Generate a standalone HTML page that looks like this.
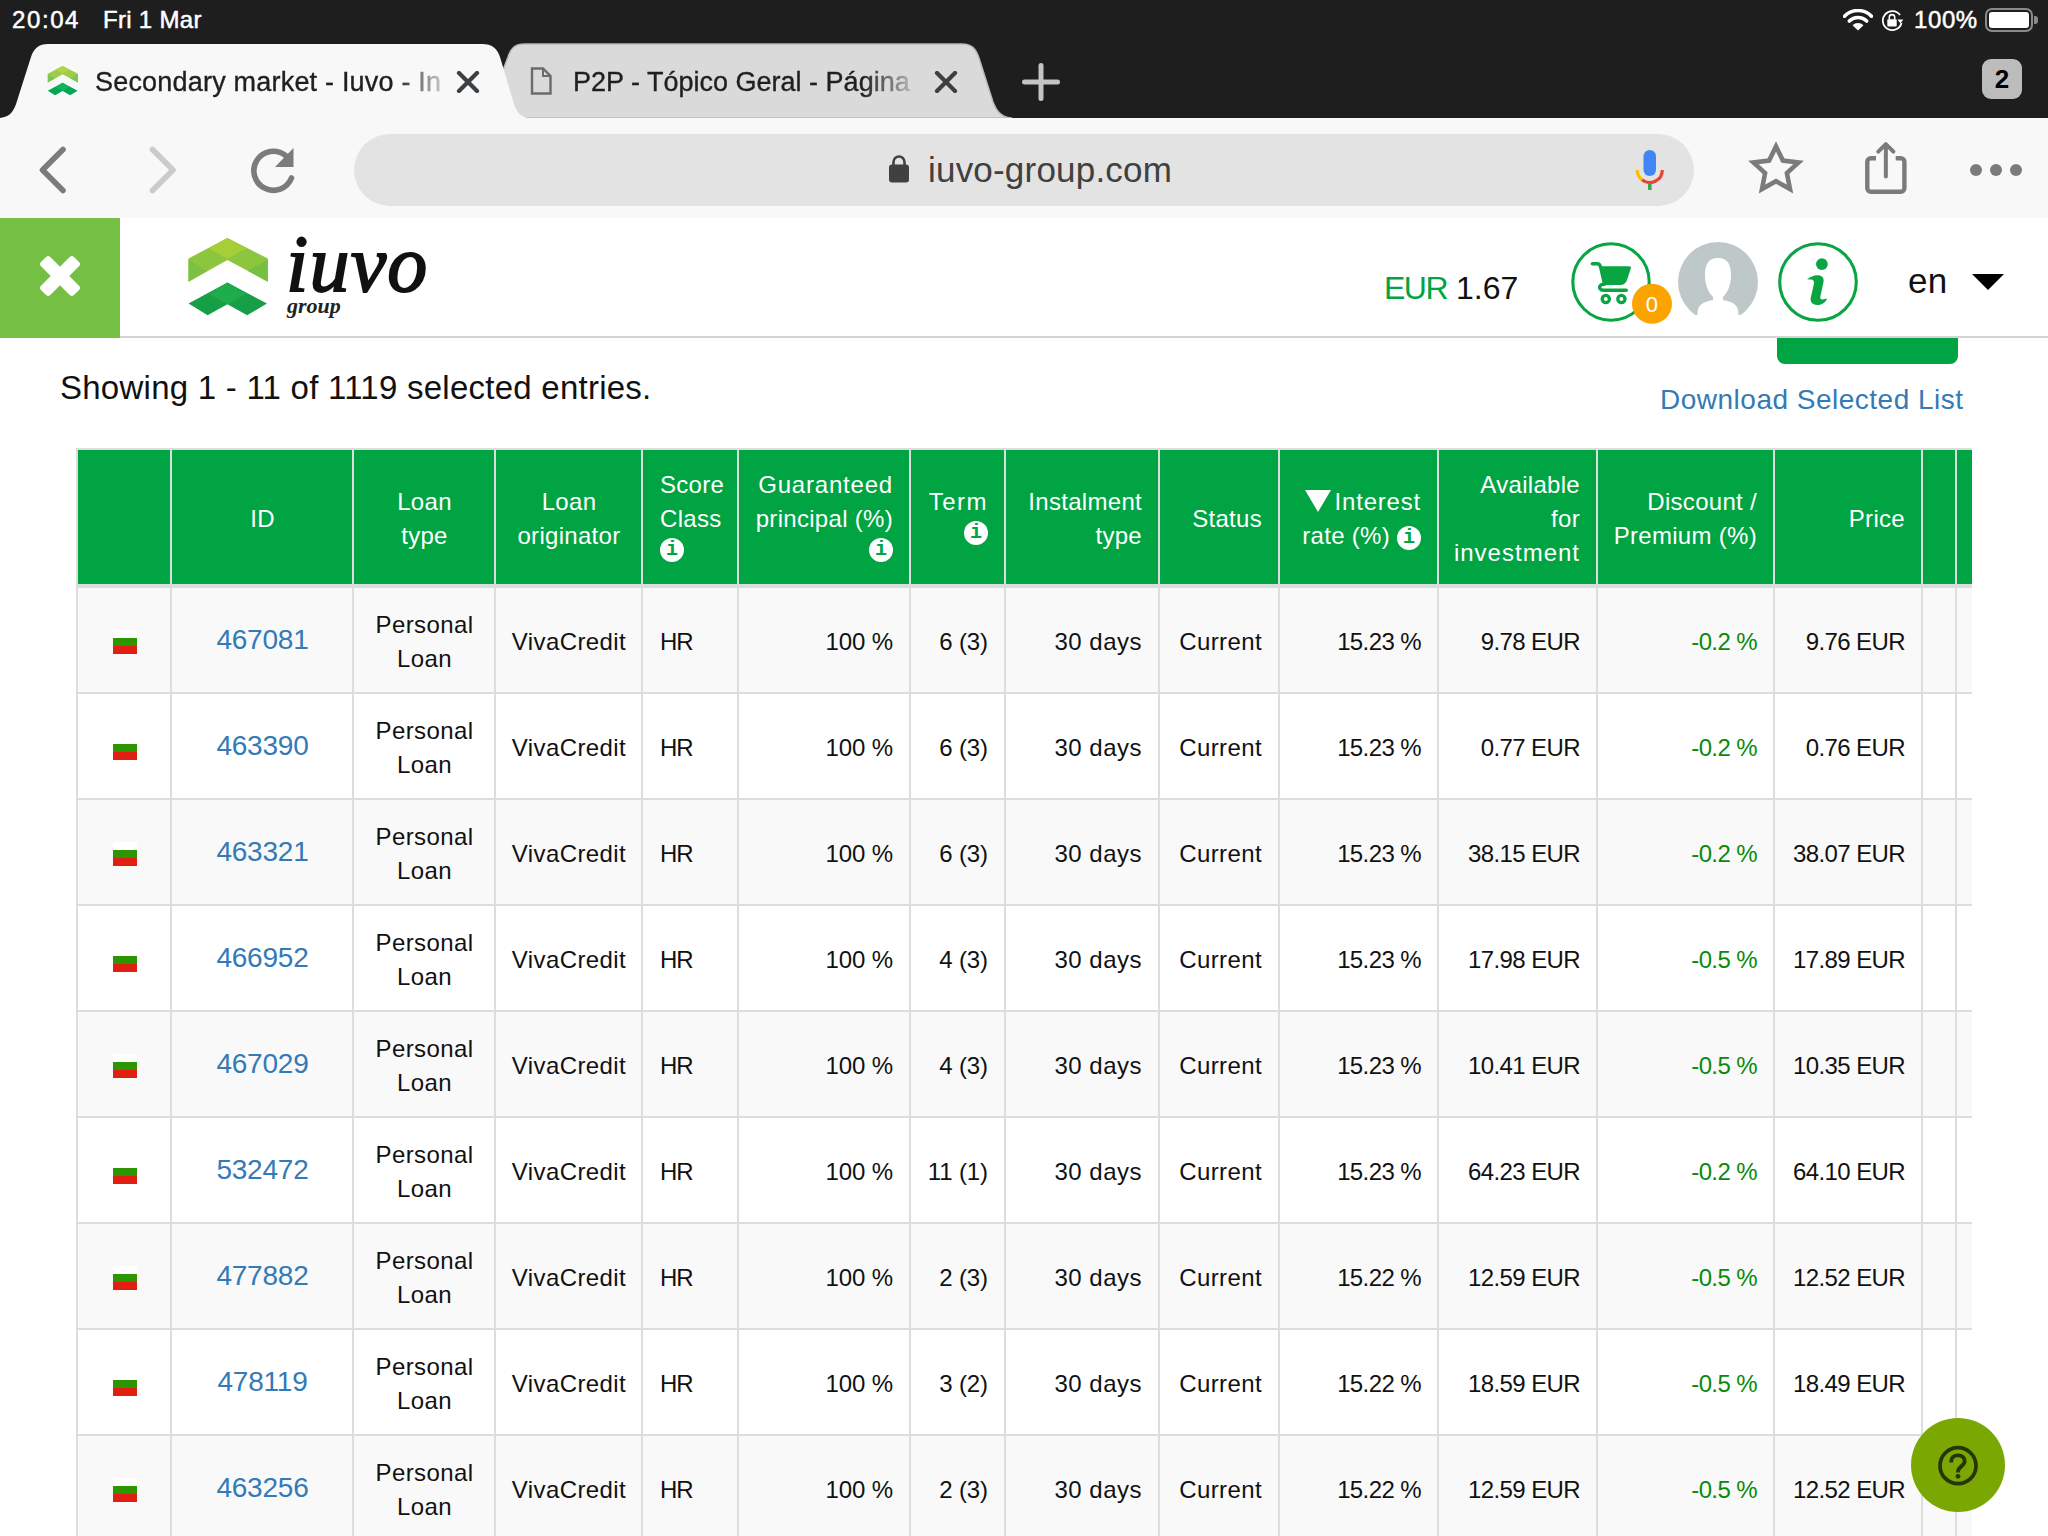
<!DOCTYPE html><html><head><meta charset="utf-8"><style>
*{margin:0;padding:0;box-sizing:border-box}
html,body{width:2048px;height:1536px;overflow:hidden;background:#fff;font-family:"Liberation Sans",sans-serif;position:relative}
.a{position:absolute}
.sb{color:#fff;font-size:24px;-webkit-text-stroke:0.5px #fff}
.hc{position:absolute;display:flex;flex-direction:column;justify-content:center;color:#fff;font-size:24px;line-height:34px;padding:3px 16px 0 17px;letter-spacing:0.3px;white-space:nowrap}
.bc{position:absolute;display:flex;flex-direction:column;justify-content:center;color:#111;font-size:24px;line-height:34px;padding:4px 16px 0 17px;letter-spacing:-0.6px;white-space:nowrap}.w{letter-spacing:0.4px}
.L{align-items:flex-start;text-align:left}
.C{align-items:center;text-align:center}
.R{align-items:flex-end;text-align:right}
.ii{display:inline-block;width:24px;height:24px;border-radius:50%;background:#fff;color:#00a443;font-family:"Liberation Mono",monospace;font-weight:bold;font-size:20px;line-height:24px;text-align:center;letter-spacing:0;vertical-align:middle;position:relative;top:-4px}
.tri{display:inline-block;width:0;height:0;border-left:13px solid transparent;border-right:13px solid transparent;border-top:22px solid #fff;margin-right:4px;vertical-align:-2px}.hc .ln{display:block}</style></head><body><div class="a" style="left:0;top:0;width:2048px;height:118px;background:#1e1e1e"></div><div class="a sb" style="left:12px;top:3px;line-height:34px;letter-spacing:1.6px">20:04</div><div class="a sb" style="left:103px;top:3px;line-height:34px;letter-spacing:0.3px">Fri 1 Mar</div><div class="a sb" style="left:1914px;top:3px;line-height:34px;letter-spacing:0.6px">100%</div><svg class="a" style="left:1843px;top:9px" width="30" height="22" viewBox="0 0 30 22">
<path d="M1.5 7.2 A19 19 0 0 1 28.5 7.2" fill="none" stroke="#fff" stroke-width="3.6" stroke-linecap="round"/>
<path d="M6.3 12 A12.5 12.5 0 0 1 23.7 12" fill="none" stroke="#fff" stroke-width="3.6" stroke-linecap="round"/>
<path d="M9.5 16.2 L15 21.5 L20.5 16.2 A8 8 0 0 0 9.5 16.2Z" fill="#fff"/>
</svg><svg class="a" style="left:1881px;top:9px" width="25" height="23" viewBox="0 0 25 23">
<path d="M20.5 14 A9.5 9.5 0 1 1 19 6" fill="none" stroke="#fff" stroke-width="1.8"/>
<path d="M17 10.5 L22.8 10.5 L20 14.5Z" fill="#fff" transform="translate(-0.5,0)"/>
<rect x="6.3" y="10.3" width="9.4" height="7.2" rx="1" fill="#fff"/>
<path d="M8.3 10.5 V8.3 A2.7 2.7 0 0 1 13.7 8.3 V10.5" fill="none" stroke="#fff" stroke-width="1.6"/>
</svg><div class="a" style="left:1985px;top:8px;width:48px;height:24px;border:2.5px solid #8a8a8a;border-radius:7px"></div><div class="a" style="left:1989px;top:12px;width:40px;height:16px;background:#fff;border-radius:3px"></div><div class="a" style="left:2034px;top:16px;width:4px;height:8px;background:#8a8a8a;border-radius:0 3px 3px 0"></div><svg class="a" style="left:0;top:40px" width="1100" height="80" viewBox="0 40 1100 80">
<path d="M470 118 L485 118 L508 57 C511 48 515 44 525 44 L962 44 C972 44 976 49 979 58 L993 102 C997 113 1003 118 1012 118 Z" fill="#dadada" stroke="#b9b9b9" stroke-width="1.5"/>
<path d="M-2 118 C10 118 14 111 17 101 L31 57 C34 48 39 44 48 44 L482 44 C492 44 497 48 500 57 L513 101 C516 111 520 118 530 118 Z" fill="#f8f8f8"/>
</svg><svg class="a" style="left:46px;top:64px" width="34" height="34" viewBox="0 0 34 34"><g transform="translate(1.8,1.9) scale(0.38) translate(-188.5,-238)">
<path d="M188.5 258.5 L227.4 238 L267.8 258.5 L267.8 281.7 L227.4 259.9 L188.5 281.7Z" fill="#9ccc4a"/>
<path d="M208.5 248.2 L227.4 238 L246.8 248.2 L227.4 258.7Z" fill="#b0d444"/>
<path d="M188.5 259.2 L207 271.3 L188.5 281.7Z" fill="#7dc455"/>
<path d="M267.8 259.2 L248 271 L267.8 281.7Z" fill="#7dc455"/>
<path d="M188.5 303.6 L227.4 282.4 L267 303.6 L247.2 315.2 L227.4 304.3 L207.6 315.2Z" fill="#03a654"/>
<path d="M209 294 L227.4 282.4 L245.9 294 L227.4 304.3Z" fill="#0db55b"/>
</g></svg><div class="a" style="left:95px;top:64px;width:345px;height:36px;overflow:hidden;white-space:nowrap;font-size:27px;line-height:36px;color:#1f1f1f;letter-spacing:0.2px;-webkit-text-stroke:0.35px #1f1f1f;-webkit-mask-image:linear-gradient(90deg,#000 300px,rgba(0,0,0,0.25) 345px)">Secondary market - Iuvo - Investing</div><svg class="a" style="left:456px;top:71px" width="24" height="22" viewBox="0 0 24 22"><path d="M3 2 L21 20 M21 2 L3 20" stroke="#3c4043" stroke-width="4.2" stroke-linecap="round"/></svg><svg class="a" style="left:530px;top:67px" width="22" height="28" viewBox="0 0 22 28"><path d="M2 1.5 H13 L20.5 9 V26.5 H2Z" fill="none" stroke="#6b6b6b" stroke-width="2.4"/><path d="M13 1.5 V9 H20.5" fill="none" stroke="#6b6b6b" stroke-width="2"/></svg><div class="a" style="left:573px;top:64px;width:338px;height:36px;overflow:hidden;white-space:nowrap;font-size:27px;line-height:36px;color:#1f1f1f;-webkit-text-stroke:0.35px #1f1f1f;-webkit-mask-image:linear-gradient(90deg,#000 290px,rgba(0,0,0,0.2) 338px)">P2P - Tópico Geral - Página 145</div><svg class="a" style="left:934px;top:71px" width="24" height="22" viewBox="0 0 24 22"><path d="M3 2 L21 20 M21 2 L3 20" stroke="#3c4043" stroke-width="4.2" stroke-linecap="round"/></svg><svg class="a" style="left:1022px;top:63px" width="38" height="38" viewBox="0 0 38 38"><path d="M19 2.5 V35.5 M2.5 19 H35.5" stroke="#c4c4c4" stroke-width="5" stroke-linecap="round"/></svg><div class="a" style="left:1982px;top:59px;width:40px;height:40px;background:#bcbcbc;border-radius:9px;color:#000;font-weight:bold;font-size:26px;line-height:40px;text-align:center">2</div><div class="a" style="left:0;top:118px;width:2048px;height:100px;background:#f8f8f8"></div><svg class="a" style="left:30px;top:140px" width="50" height="60" viewBox="0 0 50 60"><path d="M33 9.5 L12.5 30 L33 50.5" fill="none" stroke="#7b7b7b" stroke-width="5.6" stroke-linecap="round" stroke-linejoin="round"/></svg><svg class="a" style="left:140px;top:140px" width="50" height="60" viewBox="0 0 50 60"><path d="M12.5 9.5 L33 30 L12.5 50.5" fill="none" stroke="#cbcbcb" stroke-width="5.6" stroke-linecap="round" stroke-linejoin="round"/></svg><svg class="a" style="left:244px;top:142px" width="56" height="56" viewBox="0 0 56 56">
<path d="M47.5 36 A19.5 19.5 0 1 1 41.5 13.5" fill="none" stroke="#7b7b7b" stroke-width="5.6" stroke-linecap="round"/>
<path d="M49.5 6 L49.5 25 L31 25Z" fill="#7b7b7b"/></svg><div class="a" style="left:354px;top:134px;width:1340px;height:72px;background:#e3e3e3;border-radius:36px"></div><svg class="a" style="left:887px;top:155px" width="24" height="30" viewBox="0 0 24 30"><rect x="2" y="9.5" width="20" height="18" rx="3" fill="#404040"/><path d="M6.5 10 V7 A5.5 5.5 0 0 1 17.5 7 V10" fill="none" stroke="#404040" stroke-width="2.6"/></svg><div class="a" style="left:928px;top:148px;font-size:35px;line-height:44px;color:#404040;letter-spacing:0.2px">iuvo-group.com</div><svg class="a" style="left:1630px;top:146px" width="40" height="48" viewBox="0 0 40 48">
<rect x="13.5" y="4" width="12.5" height="26" rx="6.25" fill="#4285f4"/>
<path d="M7.3 24 A12.5 12.5 0 0 0 12 33.8" fill="none" stroke="#fbbc05" stroke-width="3.2"/>
<path d="M12 33.8 A12.5 12.5 0 0 0 32.3 24" fill="none" stroke="#ea4335" stroke-width="3.2"/>
<rect x="18" y="37" width="3.6" height="7" fill="#34a853"/>
</svg><svg class="a" style="left:1745px;top:138px" width="62" height="60" viewBox="0 0 62 60">
<path d="M31 8.5 L37.9 22.5 L53.6 24.4 L41.9 35.1 L45 51 L31 43.2 L17 51 L20.1 35.1 L8.4 24.4 L24.1 22.5Z" fill="none" stroke="#7b7b7b" stroke-width="4.6" stroke-linejoin="miter"/>
</svg><svg class="a" style="left:1858px;top:136px" width="56" height="64" viewBox="0 0 56 64">
<path d="M18 22.3 H12.8 A3.5 3.5 0 0 0 9.3 25.8 V52.2 A3.5 3.5 0 0 0 12.8 55.7 H42.9 A3.5 3.5 0 0 0 46.4 52.2 V25.8 A3.5 3.5 0 0 0 42.9 22.3 H37.7" fill="none" stroke="#7b7b7b" stroke-width="4.4" stroke-linecap="butt"/>
<path d="M27.85 40.5 V8.5 M20.3 15.7 L27.85 8.2 L35.4 15.7" fill="none" stroke="#7b7b7b" stroke-width="4" stroke-linecap="round" stroke-linejoin="round"/>
</svg><div class="a" style="left:1970px;top:164px;width:12px;height:12px;border-radius:50%;background:#7b7b7b"></div><div class="a" style="left:1990px;top:164px;width:12px;height:12px;border-radius:50%;background:#7b7b7b"></div><div class="a" style="left:2010px;top:164px;width:12px;height:12px;border-radius:50%;background:#7b7b7b"></div><div class="a" style="left:0;top:218px;width:2048px;height:1318px;background:#fff"></div><div class="a" style="left:1777px;top:300px;width:181px;height:64px;background:#00a443;border-radius:8px"></div><div class="a" style="left:0;top:218px;width:2048px;height:118px;background:#fff"></div><div class="a" style="left:0;top:336px;width:2048px;height:2px;background:#d4d4d4"></div><div class="a" style="left:0;top:218px;width:120px;height:120px;background:#74bf44"></div><svg class="a" style="left:36px;top:252px" width="48" height="48" viewBox="0 0 48 48"><g transform="translate(24,24)"><rect x="-23.3" y="-6.6" width="46.6" height="13.2" rx="3" fill="#fff" transform="rotate(45)"/><rect x="-23.3" y="-6.6" width="46.6" height="13.2" rx="3" fill="#fff" transform="rotate(-45)"/></g></svg><svg class="a" style="left:186px;top:236px" width="84" height="84" viewBox="186 236 84 84">
<path d="M188.5 258.5 L227.4 238 L267.8 258.5 L267.8 281.7 L227.4 259.9 L188.5 281.7Z" fill="#8cc63f"/>
<path d="M208.5 248.2 L227.4 238 L246.8 248.2 L227.4 258.7Z" fill="#a6ce39"/>
<path d="M188.5 259.2 L207 271.3 L188.5 281.7Z" fill="#7bc143"/>
<path d="M267.8 259.2 L248 271 L267.8 281.7Z" fill="#76bf43"/>
<path d="M188.5 303.6 L227.4 282.4 L267 303.6 L247.2 315.2 L227.4 304.3 L207.6 315.2Z" fill="#179f48"/>
<path d="M209 294 L227.4 282.4 L245.9 294 L227.4 304.3Z" fill="#1fac4b"/>
</svg><div class="a" style="left:286px;top:219px;font-family:'Liberation Serif',serif;font-style:italic;font-weight:normal;-webkit-text-stroke:1.8px #111;font-size:80px;line-height:90px;color:#111;letter-spacing:1.2px">iuvo</div><div class="a" style="left:287px;top:291px;font-family:'Liberation Serif',serif;font-style:italic;font-weight:bold;font-size:22px;line-height:30px;color:#222">group</div><div class="a" style="left:1384px;top:266px;font-size:32px;line-height:44px;color:#111;white-space:nowrap"><span style="color:#00a443;letter-spacing:-1.5px">EUR</span> 1.67</div><svg class="a" style="left:1570px;top:241px" width="104" height="84" viewBox="1570 241 104 84">
<circle cx="1611" cy="282" r="38.2" fill="none" stroke="#0aa543" stroke-width="3.1"/>
<path d="M1592.3 263.8 H1597.2 C1599 263.8 1600 265 1600.6 267 L1604.5 283.5" fill="none" stroke="#0aa543" stroke-width="3.4" stroke-linecap="round" stroke-linejoin="round"/>
<path d="M1600.8 266.2 H1629.3 C1630.6 266.2 1631.2 267.2 1630.8 268.4 L1627.2 279.6 C1626.2 282.8 1624.3 284.9 1621 284.9 H1604.5 Z" fill="#0aa543"/>
<path d="M1604.5 284.2 C1601.2 284.2 1599.6 285.8 1599.6 287.3 C1599.6 289 1601.2 290.3 1603.5 290.3 H1626.3" fill="none" stroke="#0aa543" stroke-width="3.4" stroke-linecap="round" stroke-linejoin="round"/>
<circle cx="1605.8" cy="299" r="3.6" fill="none" stroke="#0aa543" stroke-width="3.3"/>
<circle cx="1621.4" cy="299" r="3.6" fill="none" stroke="#0aa543" stroke-width="3.3"/>
<circle cx="1652" cy="303.8" r="20" fill="#fba400"/>
<text x="1651.8" y="312.3" text-anchor="middle" font-family="Liberation Sans" font-size="22" fill="#fff">0</text>
</svg><svg class="a" style="left:1678px;top:242px" width="80" height="73" viewBox="0 0 80 73">
<defs><clipPath id="cav"><circle cx="40" cy="40" r="40"/></clipPath></defs>
<circle cx="40" cy="40" r="40" fill="#bfc8c8"/>
<g clip-path="url(#cav)">
<path d="M40 16 C30 16 27 23 27 33 C27 44 31 51 35 55 L35 58 C25 60 19.5 62.5 19.5 72 L19 90 L61 90 L60.5 72 C60.5 62.5 55 60 45 58 L45 55 C49 51 53 44 53 33 C53 23 50 16 40 16Z" fill="#fff"/>
</g></svg><svg class="a" style="left:1777px;top:241px" width="82" height="82" viewBox="1777 241 82 82">
<circle cx="1818" cy="282" r="38.3" fill="none" stroke="#0aa543" stroke-width="3.1"/>
<circle cx="1821.9" cy="264.1" r="5.9" fill="#0aa543"/>
<path d="M1807.2 279.2 C1810 277 1813.5 275.4 1817.5 275.3 C1821.5 275.2 1824.2 277.5 1823.6 281.5 L1820.4 296.5 C1820 298.5 1820.8 299.6 1822.5 299.4 C1824 299.2 1825.6 298.6 1827 298.4 C1826.5 301.5 1822 305 1817.5 305 C1812.5 305 1809.8 302 1810.8 297.5 L1813.8 284.5 C1814.3 282 1814 280 1811.5 279.6 C1810 279.4 1808.6 279.4 1807.2 279.2 Z" fill="#0aa543"/>
</svg><div class="a" style="left:1908px;top:259px;font-size:35px;line-height:44px;color:#111;letter-spacing:0.3px">en</div><svg class="a" style="left:1971px;top:273px" width="34" height="18" viewBox="0 0 34 18"><path d="M1 1 H33 L17 17Z" fill="#000"/></svg><div class="a" style="left:60px;top:366px;font-size:33px;line-height:44px;color:#111;white-space:nowrap;letter-spacing:0.25px">Showing 1 - 11 of 1119 selected entries.</div><div class="a" style="left:1660px;top:380px;font-size:28px;line-height:40px;color:#337ab7;white-space:nowrap;letter-spacing:0.5px">Download Selected List</div><div class="a" style="left:76px;top:448px;width:1896px;height:1088px;overflow:hidden"><div class="a" style="left:0px;top:0px;width:1896px;height:1088px;background:#dddddd"></div><div class="a" style="left:2px;top:2px;width:1894px;height:134px;background:#00a443"></div><div class="a" style="left:2px;top:140px;width:1894px;height:104px;background:#f9f9f9"></div><div class="a" style="left:2px;top:246px;width:1894px;height:104px;background:#ffffff"></div><div class="a" style="left:2px;top:352px;width:1894px;height:104px;background:#f9f9f9"></div><div class="a" style="left:2px;top:458px;width:1894px;height:104px;background:#ffffff"></div><div class="a" style="left:2px;top:564px;width:1894px;height:104px;background:#f9f9f9"></div><div class="a" style="left:2px;top:670px;width:1894px;height:104px;background:#ffffff"></div><div class="a" style="left:2px;top:776px;width:1894px;height:104px;background:#f9f9f9"></div><div class="a" style="left:2px;top:882px;width:1894px;height:104px;background:#ffffff"></div><div class="a" style="left:2px;top:988px;width:1894px;height:104px;background:#f9f9f9"></div><div class="a" style="left:0px;top:0px;width:2px;height:1088px;background:#dddddd"></div><div class="a" style="left:94px;top:0px;width:2px;height:1088px;background:#dddddd"></div><div class="a" style="left:276px;top:0px;width:2px;height:1088px;background:#dddddd"></div><div class="a" style="left:418px;top:0px;width:2px;height:1088px;background:#dddddd"></div><div class="a" style="left:565px;top:0px;width:2px;height:1088px;background:#dddddd"></div><div class="a" style="left:661px;top:0px;width:2px;height:1088px;background:#dddddd"></div><div class="a" style="left:833px;top:0px;width:2px;height:1088px;background:#dddddd"></div><div class="a" style="left:928px;top:0px;width:2px;height:1088px;background:#dddddd"></div><div class="a" style="left:1082px;top:0px;width:2px;height:1088px;background:#dddddd"></div><div class="a" style="left:1202px;top:0px;width:2px;height:1088px;background:#dddddd"></div><div class="a" style="left:1361px;top:0px;width:2px;height:1088px;background:#dddddd"></div><div class="a" style="left:1520px;top:0px;width:2px;height:1088px;background:#dddddd"></div><div class="a" style="left:1697px;top:0px;width:2px;height:1088px;background:#dddddd"></div><div class="a" style="left:1845px;top:0px;width:2px;height:1088px;background:#dddddd"></div><div class="a" style="left:1879px;top:0px;width:2px;height:1088px;background:#dddddd"></div><div class="hc C" style="left:96px;top:2px;width:180px;height:134px;"><div>ID</div></div><div class="hc C" style="left:278px;top:2px;width:140px;height:134px;"><div>Loan<br>type</div></div><div class="hc C" style="left:420px;top:2px;width:145px;height:134px;"><div>Loan<br>originator</div></div><div class="hc L" style="left:567px;top:2px;width:94px;height:134px;"><div>Score<br>Class<br><span class="ii">i</span></div></div><div class="hc R" style="left:663px;top:2px;width:170px;height:134px;"><div><span style="letter-spacing:0.8px">Guaranteed</span><br>principal (%)<br><span class="ii">i</span></div></div><div class="hc R" style="left:835px;top:2px;width:93px;height:134px;"><div><span style="letter-spacing:1.5px">Term</span><br><span class="ii">i</span></div></div><div class="hc R" style="left:930px;top:2px;width:152px;height:134px;"><div>Instalment<br>type</div></div><div class="hc R" style="left:1084px;top:2px;width:118px;height:134px;"><div>Status</div></div><div class="hc R" style="left:1204px;top:2px;width:157px;height:134px;"><div><span class="ln"><span class="tri"></span><span style="letter-spacing:0.8px">Interest</span></span><span class="ln">rate (%) <span class="ii" style="top:1px">i</span></span></div></div><div class="hc R" style="left:1363px;top:2px;width:157px;height:134px;"><div>Available<br>for<br><span style="letter-spacing:1px">investment</span></div></div><div class="hc R" style="left:1522px;top:2px;width:175px;height:134px;"><div>Discount /<br>Premium (%)</div></div><div class="hc R" style="left:1699px;top:2px;width:146px;height:134px;"><div>Price</div></div><div class="bc C" style="left:2px;top:140px;width:92px;height:104px;"><div style="width:24px;height:24px;background:linear-gradient(#fff 0 8px,#2d9500 8px 16px,#e01e12 16px 24px)"></div></div><div class="bc C" style="left:96px;top:140px;width:180px;height:104px;"><div style="font-size:28px;color:#337ab7;letter-spacing:-0.2px;margin-top:-4px">467081</div></div><div class="bc C" style="left:278px;top:140px;width:140px;height:104px;"><div class="w">Personal<br>Loan</div></div><div class="bc C" style="left:420px;top:140px;width:145px;height:104px;"><div class="w">VivaCredit</div></div><div class="bc L" style="left:567px;top:140px;width:94px;height:104px;"><div style="letter-spacing:-1px">HR</div></div><div class="bc R" style="left:663px;top:140px;width:170px;height:104px;"><div style="letter-spacing:-0.1px">100 %</div></div><div class="bc R" style="left:835px;top:140px;width:93px;height:104px;"><div style="letter-spacing:-0.1px">6 (3)</div></div><div class="bc R" style="left:930px;top:140px;width:152px;height:104px;"><div style="letter-spacing:0.5px">30 days</div></div><div class="bc R" style="left:1084px;top:140px;width:118px;height:104px;"><div class="w">Current</div></div><div class="bc R" style="left:1204px;top:140px;width:157px;height:104px;"><div>15.23 %</div></div><div class="bc R" style="left:1363px;top:140px;width:157px;height:104px;"><div>9.78 EUR</div></div><div class="bc R" style="left:1522px;top:140px;width:175px;height:104px;"><div style="color:#0a8a0a">-0.2 %</div></div><div class="bc R" style="left:1699px;top:140px;width:146px;height:104px;"><div>9.76 EUR</div></div><div class="bc C" style="left:2px;top:246px;width:92px;height:104px;"><div style="width:24px;height:24px;background:linear-gradient(#fff 0 8px,#2d9500 8px 16px,#e01e12 16px 24px)"></div></div><div class="bc C" style="left:96px;top:246px;width:180px;height:104px;"><div style="font-size:28px;color:#337ab7;letter-spacing:-0.2px;margin-top:-4px">463390</div></div><div class="bc C" style="left:278px;top:246px;width:140px;height:104px;"><div class="w">Personal<br>Loan</div></div><div class="bc C" style="left:420px;top:246px;width:145px;height:104px;"><div class="w">VivaCredit</div></div><div class="bc L" style="left:567px;top:246px;width:94px;height:104px;"><div style="letter-spacing:-1px">HR</div></div><div class="bc R" style="left:663px;top:246px;width:170px;height:104px;"><div style="letter-spacing:-0.1px">100 %</div></div><div class="bc R" style="left:835px;top:246px;width:93px;height:104px;"><div style="letter-spacing:-0.1px">6 (3)</div></div><div class="bc R" style="left:930px;top:246px;width:152px;height:104px;"><div style="letter-spacing:0.5px">30 days</div></div><div class="bc R" style="left:1084px;top:246px;width:118px;height:104px;"><div class="w">Current</div></div><div class="bc R" style="left:1204px;top:246px;width:157px;height:104px;"><div>15.23 %</div></div><div class="bc R" style="left:1363px;top:246px;width:157px;height:104px;"><div>0.77 EUR</div></div><div class="bc R" style="left:1522px;top:246px;width:175px;height:104px;"><div style="color:#0a8a0a">-0.2 %</div></div><div class="bc R" style="left:1699px;top:246px;width:146px;height:104px;"><div>0.76 EUR</div></div><div class="bc C" style="left:2px;top:352px;width:92px;height:104px;"><div style="width:24px;height:24px;background:linear-gradient(#fff 0 8px,#2d9500 8px 16px,#e01e12 16px 24px)"></div></div><div class="bc C" style="left:96px;top:352px;width:180px;height:104px;"><div style="font-size:28px;color:#337ab7;letter-spacing:-0.2px;margin-top:-4px">463321</div></div><div class="bc C" style="left:278px;top:352px;width:140px;height:104px;"><div class="w">Personal<br>Loan</div></div><div class="bc C" style="left:420px;top:352px;width:145px;height:104px;"><div class="w">VivaCredit</div></div><div class="bc L" style="left:567px;top:352px;width:94px;height:104px;"><div style="letter-spacing:-1px">HR</div></div><div class="bc R" style="left:663px;top:352px;width:170px;height:104px;"><div style="letter-spacing:-0.1px">100 %</div></div><div class="bc R" style="left:835px;top:352px;width:93px;height:104px;"><div style="letter-spacing:-0.1px">6 (3)</div></div><div class="bc R" style="left:930px;top:352px;width:152px;height:104px;"><div style="letter-spacing:0.5px">30 days</div></div><div class="bc R" style="left:1084px;top:352px;width:118px;height:104px;"><div class="w">Current</div></div><div class="bc R" style="left:1204px;top:352px;width:157px;height:104px;"><div>15.23 %</div></div><div class="bc R" style="left:1363px;top:352px;width:157px;height:104px;"><div>38.15 EUR</div></div><div class="bc R" style="left:1522px;top:352px;width:175px;height:104px;"><div style="color:#0a8a0a">-0.2 %</div></div><div class="bc R" style="left:1699px;top:352px;width:146px;height:104px;"><div>38.07 EUR</div></div><div class="bc C" style="left:2px;top:458px;width:92px;height:104px;"><div style="width:24px;height:24px;background:linear-gradient(#fff 0 8px,#2d9500 8px 16px,#e01e12 16px 24px)"></div></div><div class="bc C" style="left:96px;top:458px;width:180px;height:104px;"><div style="font-size:28px;color:#337ab7;letter-spacing:-0.2px;margin-top:-4px">466952</div></div><div class="bc C" style="left:278px;top:458px;width:140px;height:104px;"><div class="w">Personal<br>Loan</div></div><div class="bc C" style="left:420px;top:458px;width:145px;height:104px;"><div class="w">VivaCredit</div></div><div class="bc L" style="left:567px;top:458px;width:94px;height:104px;"><div style="letter-spacing:-1px">HR</div></div><div class="bc R" style="left:663px;top:458px;width:170px;height:104px;"><div style="letter-spacing:-0.1px">100 %</div></div><div class="bc R" style="left:835px;top:458px;width:93px;height:104px;"><div style="letter-spacing:-0.1px">4 (3)</div></div><div class="bc R" style="left:930px;top:458px;width:152px;height:104px;"><div style="letter-spacing:0.5px">30 days</div></div><div class="bc R" style="left:1084px;top:458px;width:118px;height:104px;"><div class="w">Current</div></div><div class="bc R" style="left:1204px;top:458px;width:157px;height:104px;"><div>15.23 %</div></div><div class="bc R" style="left:1363px;top:458px;width:157px;height:104px;"><div>17.98 EUR</div></div><div class="bc R" style="left:1522px;top:458px;width:175px;height:104px;"><div style="color:#0a8a0a">-0.5 %</div></div><div class="bc R" style="left:1699px;top:458px;width:146px;height:104px;"><div>17.89 EUR</div></div><div class="bc C" style="left:2px;top:564px;width:92px;height:104px;"><div style="width:24px;height:24px;background:linear-gradient(#fff 0 8px,#2d9500 8px 16px,#e01e12 16px 24px)"></div></div><div class="bc C" style="left:96px;top:564px;width:180px;height:104px;"><div style="font-size:28px;color:#337ab7;letter-spacing:-0.2px;margin-top:-4px">467029</div></div><div class="bc C" style="left:278px;top:564px;width:140px;height:104px;"><div class="w">Personal<br>Loan</div></div><div class="bc C" style="left:420px;top:564px;width:145px;height:104px;"><div class="w">VivaCredit</div></div><div class="bc L" style="left:567px;top:564px;width:94px;height:104px;"><div style="letter-spacing:-1px">HR</div></div><div class="bc R" style="left:663px;top:564px;width:170px;height:104px;"><div style="letter-spacing:-0.1px">100 %</div></div><div class="bc R" style="left:835px;top:564px;width:93px;height:104px;"><div style="letter-spacing:-0.1px">4 (3)</div></div><div class="bc R" style="left:930px;top:564px;width:152px;height:104px;"><div style="letter-spacing:0.5px">30 days</div></div><div class="bc R" style="left:1084px;top:564px;width:118px;height:104px;"><div class="w">Current</div></div><div class="bc R" style="left:1204px;top:564px;width:157px;height:104px;"><div>15.23 %</div></div><div class="bc R" style="left:1363px;top:564px;width:157px;height:104px;"><div>10.41 EUR</div></div><div class="bc R" style="left:1522px;top:564px;width:175px;height:104px;"><div style="color:#0a8a0a">-0.5 %</div></div><div class="bc R" style="left:1699px;top:564px;width:146px;height:104px;"><div>10.35 EUR</div></div><div class="bc C" style="left:2px;top:670px;width:92px;height:104px;"><div style="width:24px;height:24px;background:linear-gradient(#fff 0 8px,#2d9500 8px 16px,#e01e12 16px 24px)"></div></div><div class="bc C" style="left:96px;top:670px;width:180px;height:104px;"><div style="font-size:28px;color:#337ab7;letter-spacing:-0.2px;margin-top:-4px">532472</div></div><div class="bc C" style="left:278px;top:670px;width:140px;height:104px;"><div class="w">Personal<br>Loan</div></div><div class="bc C" style="left:420px;top:670px;width:145px;height:104px;"><div class="w">VivaCredit</div></div><div class="bc L" style="left:567px;top:670px;width:94px;height:104px;"><div style="letter-spacing:-1px">HR</div></div><div class="bc R" style="left:663px;top:670px;width:170px;height:104px;"><div style="letter-spacing:-0.1px">100 %</div></div><div class="bc R" style="left:835px;top:670px;width:93px;height:104px;"><div style="letter-spacing:-0.1px">11 (1)</div></div><div class="bc R" style="left:930px;top:670px;width:152px;height:104px;"><div style="letter-spacing:0.5px">30 days</div></div><div class="bc R" style="left:1084px;top:670px;width:118px;height:104px;"><div class="w">Current</div></div><div class="bc R" style="left:1204px;top:670px;width:157px;height:104px;"><div>15.23 %</div></div><div class="bc R" style="left:1363px;top:670px;width:157px;height:104px;"><div>64.23 EUR</div></div><div class="bc R" style="left:1522px;top:670px;width:175px;height:104px;"><div style="color:#0a8a0a">-0.2 %</div></div><div class="bc R" style="left:1699px;top:670px;width:146px;height:104px;"><div>64.10 EUR</div></div><div class="bc C" style="left:2px;top:776px;width:92px;height:104px;"><div style="width:24px;height:24px;background:linear-gradient(#fff 0 8px,#2d9500 8px 16px,#e01e12 16px 24px)"></div></div><div class="bc C" style="left:96px;top:776px;width:180px;height:104px;"><div style="font-size:28px;color:#337ab7;letter-spacing:-0.2px;margin-top:-4px">477882</div></div><div class="bc C" style="left:278px;top:776px;width:140px;height:104px;"><div class="w">Personal<br>Loan</div></div><div class="bc C" style="left:420px;top:776px;width:145px;height:104px;"><div class="w">VivaCredit</div></div><div class="bc L" style="left:567px;top:776px;width:94px;height:104px;"><div style="letter-spacing:-1px">HR</div></div><div class="bc R" style="left:663px;top:776px;width:170px;height:104px;"><div style="letter-spacing:-0.1px">100 %</div></div><div class="bc R" style="left:835px;top:776px;width:93px;height:104px;"><div style="letter-spacing:-0.1px">2 (3)</div></div><div class="bc R" style="left:930px;top:776px;width:152px;height:104px;"><div style="letter-spacing:0.5px">30 days</div></div><div class="bc R" style="left:1084px;top:776px;width:118px;height:104px;"><div class="w">Current</div></div><div class="bc R" style="left:1204px;top:776px;width:157px;height:104px;"><div>15.22 %</div></div><div class="bc R" style="left:1363px;top:776px;width:157px;height:104px;"><div>12.59 EUR</div></div><div class="bc R" style="left:1522px;top:776px;width:175px;height:104px;"><div style="color:#0a8a0a">-0.5 %</div></div><div class="bc R" style="left:1699px;top:776px;width:146px;height:104px;"><div>12.52 EUR</div></div><div class="bc C" style="left:2px;top:882px;width:92px;height:104px;"><div style="width:24px;height:24px;background:linear-gradient(#fff 0 8px,#2d9500 8px 16px,#e01e12 16px 24px)"></div></div><div class="bc C" style="left:96px;top:882px;width:180px;height:104px;"><div style="font-size:28px;color:#337ab7;letter-spacing:-0.2px;margin-top:-4px">478119</div></div><div class="bc C" style="left:278px;top:882px;width:140px;height:104px;"><div class="w">Personal<br>Loan</div></div><div class="bc C" style="left:420px;top:882px;width:145px;height:104px;"><div class="w">VivaCredit</div></div><div class="bc L" style="left:567px;top:882px;width:94px;height:104px;"><div style="letter-spacing:-1px">HR</div></div><div class="bc R" style="left:663px;top:882px;width:170px;height:104px;"><div style="letter-spacing:-0.1px">100 %</div></div><div class="bc R" style="left:835px;top:882px;width:93px;height:104px;"><div style="letter-spacing:-0.1px">3 (2)</div></div><div class="bc R" style="left:930px;top:882px;width:152px;height:104px;"><div style="letter-spacing:0.5px">30 days</div></div><div class="bc R" style="left:1084px;top:882px;width:118px;height:104px;"><div class="w">Current</div></div><div class="bc R" style="left:1204px;top:882px;width:157px;height:104px;"><div>15.22 %</div></div><div class="bc R" style="left:1363px;top:882px;width:157px;height:104px;"><div>18.59 EUR</div></div><div class="bc R" style="left:1522px;top:882px;width:175px;height:104px;"><div style="color:#0a8a0a">-0.5 %</div></div><div class="bc R" style="left:1699px;top:882px;width:146px;height:104px;"><div>18.49 EUR</div></div><div class="bc C" style="left:2px;top:988px;width:92px;height:104px;"><div style="width:24px;height:24px;background:linear-gradient(#fff 0 8px,#2d9500 8px 16px,#e01e12 16px 24px)"></div></div><div class="bc C" style="left:96px;top:988px;width:180px;height:104px;"><div style="font-size:28px;color:#337ab7;letter-spacing:-0.2px;margin-top:-4px">463256</div></div><div class="bc C" style="left:278px;top:988px;width:140px;height:104px;"><div class="w">Personal<br>Loan</div></div><div class="bc C" style="left:420px;top:988px;width:145px;height:104px;"><div class="w">VivaCredit</div></div><div class="bc L" style="left:567px;top:988px;width:94px;height:104px;"><div style="letter-spacing:-1px">HR</div></div><div class="bc R" style="left:663px;top:988px;width:170px;height:104px;"><div style="letter-spacing:-0.1px">100 %</div></div><div class="bc R" style="left:835px;top:988px;width:93px;height:104px;"><div style="letter-spacing:-0.1px">2 (3)</div></div><div class="bc R" style="left:930px;top:988px;width:152px;height:104px;"><div style="letter-spacing:0.5px">30 days</div></div><div class="bc R" style="left:1084px;top:988px;width:118px;height:104px;"><div class="w">Current</div></div><div class="bc R" style="left:1204px;top:988px;width:157px;height:104px;"><div>15.22 %</div></div><div class="bc R" style="left:1363px;top:988px;width:157px;height:104px;"><div>12.59 EUR</div></div><div class="bc R" style="left:1522px;top:988px;width:175px;height:104px;"><div style="color:#0a8a0a">-0.5 %</div></div><div class="bc R" style="left:1699px;top:988px;width:146px;height:104px;"><div>12.52 EUR</div></div></div><svg class="a" style="left:1910px;top:1417px" width="96" height="96" viewBox="1910 1417 96 96">
<circle cx="1958" cy="1465" r="47" fill="#7aa702"/>
<circle cx="1958" cy="1465.7" r="18" fill="none" stroke="#27350a" stroke-width="3.7"/>
<path d="M1951.2 1462.5 L1951.2 1461.5 C1951.2 1457.5 1954 1455.3 1958 1455.3 C1962 1455.3 1964.7 1457.8 1964.7 1461.3 C1964.7 1465.5 1958 1467 1958 1471.5 V1472.5" fill="none" stroke="#27350a" stroke-width="3.8" stroke-linecap="butt"/>
<circle cx="1958" cy="1476.3" r="2.4" fill="#27350a"/>
</svg></body></html>
